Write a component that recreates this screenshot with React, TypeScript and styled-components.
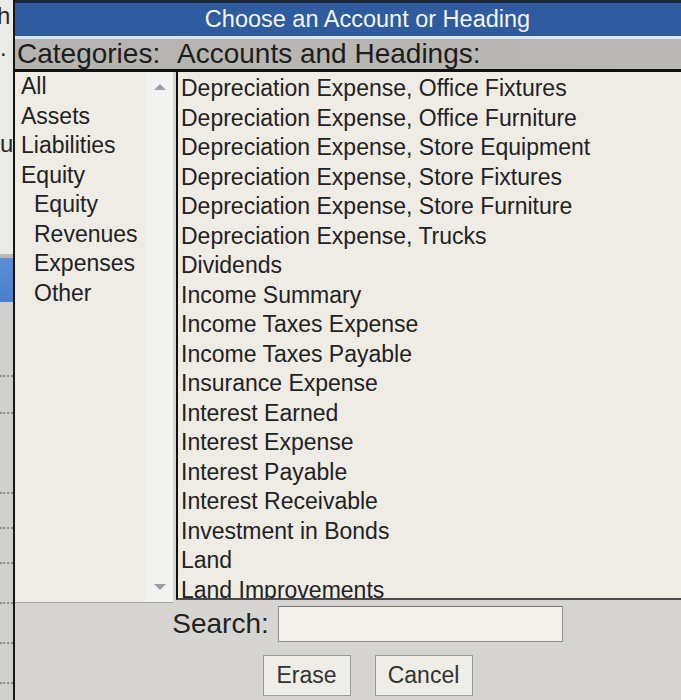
import React from 'react';
import styled, { createGlobalStyle } from 'styled-components';

const GlobalStyle = createGlobalStyle`
  html, body {
    margin: 0;
    padding: 0;
    background: #d6d5d1;
  }
  body {
    font-family: "Liberation Sans", Arial, sans-serif;
    color: #222;
  }
`;

const Screen = styled.div`
  display: flex;
  width: 681px;
  height: 700px;
  overflow: hidden;
`;

const PageBehind = styled.div`
  display: flex;
  flex-direction: column;
  flex-shrink: 0;
  width: 13px;
  overflow: hidden;
  background: #c9c9c6;
`;

const PageText = styled.div`
  height: 254px;
  flex-shrink: 0;
  background: #eceae4;
  font-size: 24px;
  line-height: 32px;
  color: #2a2a2a;
  white-space: pre;
  text-indent: -3px;
`;

const PageBlue = styled.div`
  height: 44px;
  flex-shrink: 0;
  border-top: 4px solid #b9b9b6;
  background: linear-gradient(#5c8fd6, #4a7ec7);
`;

const PageRow = styled.div<{ $h: number }>`
  height: ${(p) => p.$h}px;
  flex-shrink: 0;
  background: #cfcfcc;
  border-bottom: 2px dotted #8c8c8c;
  box-sizing: border-box;
`;

const Dialog = styled.div`
  display: flex;
  flex-direction: column;
  flex-shrink: 0;
  width: 705px;
  border-left: 2px solid #151515;
  background: #d6d5d1;
`;

const TitleBar = styled.div`
  height: 33px;
  border-top: 3px solid #1d2737;
  border-bottom: 3px solid #dfe5ee;
  background: #2f5b9f;
  color: #f4f6fb;
  font-size: 23.5px;
  line-height: 33px;
  text-align: center;
`;

const HeaderRow = styled.div`
  display: flex;
  height: 30px;
  background: linear-gradient(90deg, #b4b3af, #bab9b5);
  border-bottom: 3px solid #111;
  font-size: 28px;
  line-height: 30px;
  color: #1d1d1d;
`;

const HeaderLabel = styled.div<{ $w?: number }>`
  flex: ${(p) => (p.$w ? `0 0 ${p.$w}px` : '1')};
  padding-left: 2px;
  white-space: nowrap;
`;

const Lists = styled.div`
  display: flex;
  height: 528px;
`;

const CategoryBox = styled.div`
  display: flex;
  flex: 0 0 158px;
  height: 531px;
  background: #efece6;
  border-bottom: 1px solid #a9a8a4;
  box-sizing: border-box;
`;

const CategoryItems = styled.div`
  flex: 1;
  padding-left: 6px;
`;

const Item = styled.div<{ $indent?: boolean }>`
  height: 29.5px;
  line-height: 29.5px;
  font-size: 23px;
  white-space: nowrap;
  padding-left: ${(p) => (p.$indent ? '13px' : '0')};
`;

const Scrollbar = styled.div`
  display: flex;
  flex-direction: column;
  justify-content: space-between;
  align-items: center;
  flex: 0 0 27px;
  padding: 12px 0 12px;
  background: #f2f2f0;
`;

const Arrow = styled.div<{ $down?: boolean }>`
  width: 0;
  height: 0;
  border-left: 6px solid transparent;
  border-right: 6px solid transparent;
  ${(p) =>
    p.$down
      ? 'border-top: 6px solid #9b9cab;'
      : 'border-bottom: 6px solid #9b9cab;'}
`;

const AccountBox = styled.div`
  flex: 1;
  margin-left: 3px;
  padding-left: 3px;
  height: 528px;
  overflow: hidden;
  background: #efece6;
  border-left: 2px solid #111;
  border-bottom: 2px solid #4a4a4a;
  box-sizing: border-box;
  padding-top: 2px;
`;

const Bottom = styled.div`
  display: flex;
  flex-direction: column;
  align-items: center;
  gap: 13px;
  padding-top: 6px;
`;

const SearchRow = styled.div`
  display: flex;
  align-items: center;
  gap: 9px;
`;

const SearchLabel = styled.label`
  font-size: 28px;
  color: #222;
`;

const SearchInput = styled.input`
  width: 285px;
  height: 36px;
  box-sizing: border-box;
  background: #f4f2eb;
  border: 1px solid #8e8e8c;
  border-top-color: #7a7a78;
  outline: none;
`;

const Buttons = styled.div`
  display: flex;
  gap: 24px;
`;

const Button = styled.button<{ $w: number }>`
  width: ${(p) => p.$w}px;
  height: 41px;
  background: #eeede8;
  border: 1px solid #9b9b99;
  font-family: "Liberation Sans", Arial, sans-serif;
  font-size: 23px;
  color: #333;
  padding: 0;
`;

const categories: [string, boolean][] = [
  ['All', false],
  ['Assets', false],
  ['Liabilities', false],
  ['Equity', false],
  ['Equity', true],
  ['Revenues', true],
  ['Expenses', true],
  ['Other', true],
];

const accounts = [
  'Depreciation Expense, Office Fixtures',
  'Depreciation Expense, Office Furniture',
  'Depreciation Expense, Store Equipment',
  'Depreciation Expense, Store Fixtures',
  'Depreciation Expense, Store Furniture',
  'Depreciation Expense, Trucks',
  'Dividends',
  'Income Summary',
  'Income Taxes Expense',
  'Income Taxes Payable',
  'Insurance Expense',
  'Interest Earned',
  'Interest Expense',
  'Interest Payable',
  'Interest Receivable',
  'Investment in Bonds',
  'Land',
  'Land Improvements',
];

const behindRows = [75, 37, 80, 35, 35, 40, 40, 40, 40];

export default function App() {
  return (
    <>
      <GlobalStyle />
      <Screen>
        <PageBehind>
          <PageText>{'h\n.\n\n\nu'}</PageText>
          <PageBlue />
          {behindRows.map((h, i) => (
            <PageRow key={i} $h={h} />
          ))}
        </PageBehind>
        <Dialog>
          <TitleBar>Choose an Account or Heading</TitleBar>
          <HeaderRow>
            <HeaderLabel $w={158}>Categories:</HeaderLabel>
            <HeaderLabel>Accounts and Headings:</HeaderLabel>
          </HeaderRow>
          <Lists>
            <CategoryBox>
              <CategoryItems>
                {categories.map(([name, indent], i) => (
                  <Item key={i} $indent={indent}>
                    {name}
                  </Item>
                ))}
              </CategoryItems>
              <Scrollbar>
                <Arrow />
                <Arrow $down />
              </Scrollbar>
            </CategoryBox>
            <AccountBox>
              {accounts.map((a) => (
                <Item key={a}>{a}</Item>
              ))}
            </AccountBox>
          </Lists>
          <Bottom>
            <SearchRow>
              <SearchLabel>Search:</SearchLabel>
              <SearchInput />
            </SearchRow>
            <Buttons>
              <Button $w={88}>Erase</Button>
              <Button $w={98}>Cancel</Button>
            </Buttons>
          </Bottom>
        </Dialog>
      </Screen>
    </>
  );
}
